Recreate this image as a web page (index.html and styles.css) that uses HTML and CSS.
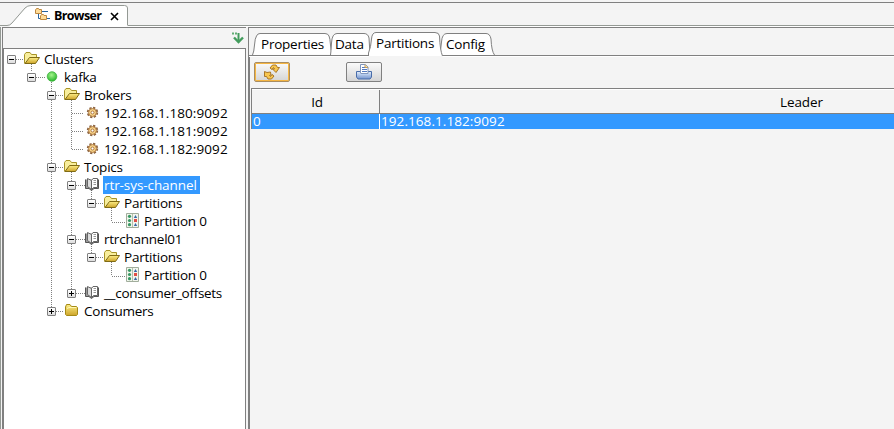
FILE: index.html
```html
<!DOCTYPE html>
<html lang="en">
<head>
<meta charset="utf-8">
<title>Browser</title>
<link rel="stylesheet" href="styles.css">
</head>
<body>
<svg width="0" height="0" class="defs">
  <defs>
    <linearGradient id="gold" x1="0" y1="0" x2="0" y2="1"><stop offset="0" stop-color="#fdee86"/><stop offset="1" stop-color="#cda42a"/></linearGradient>
    <linearGradient id="blue" x1="0" y1="0" x2="0" y2="1"><stop offset="0" stop-color="#e4eefb"/><stop offset="1" stop-color="#7394ce"/></linearGradient>
    <radialGradient id="green" cx=".45" cy=".35" r=".65"><stop offset="0" stop-color="#a4f48c"/><stop offset="1" stop-color="#27b52b"/></radialGradient>
    <symbol id="open" viewBox="0 0 16 16"><path d="M.5 12.500V3.500L2 1.500H6L7.500 3.500H12.500V7" fill="#f8ee9c" stroke="#a79327"/><path d="M1 12.500L5.500 6.500H15.500L11.500 12.500Z" fill="url(#gold)" stroke="#806b14"/></symbol>
    <symbol id="closed" viewBox="0 0 16 16"><path d="M1.500 4L2.500 1.500H6L7.500 3.500H12.500L13.500 4.500V11.500L12.500 12.500H2.500L1.500 11.500Z" fill="url(#gold)" stroke="#a58a16"/><path d="M3 5.500L5 4.500H12" fill="none" stroke="#fff7b4"/></symbol>
    <symbol id="dot" viewBox="0 0 16 16"><circle cx="8" cy="7.500" r="4.800" fill="url(#green)" stroke="#36ae37" stroke-width=".7"/></symbol>
    <symbol id="gear" viewBox="0 0 16 16"><circle cx="8.500" cy="7.500" r="4.700" fill="none" stroke="#8a6240" stroke-width="2" stroke-dasharray="2.200 1.490"/><circle cx="8.500" cy="7.500" r="3.900" fill="#f7d48b" stroke="#b27b40"/><circle cx="8.500" cy="7.500" r="1.500" fill="#fff" stroke="#a66c35" stroke-width=".9"/></symbol>
    <symbol id="book" viewBox="0 0 16 16"><path d="M1.500 2.500V11.500H5L7.500 13.500 10 11.500H14.500V2.500" fill="#999" stroke="#555"/><path d="M3.500 1.500L7.500 3.500V12.500L3.500 9.500Z" fill="#ddd" stroke="#666"/><path d="M7.500 3.500L9 1.500H13.500V10.500H9.500L7.500 12.500Z" fill="#fff" stroke="#666"/><path d="M9.500 3.500H12M9.500 5.500H12M9.500 7.500H12" stroke="#999"/></symbol>
    <symbol id="part" viewBox="0 0 16 16"><path d="M2.500 .5H14.500V14.500H2.500Z" fill="#f2f6ed" stroke="#a1ad9c"/><path d="M8.500 1V14" stroke="#b5c0ad"/><g fill="#379763"><circle cx="5.500" cy="3.300" r="1.600"/><circle cx="5.500" cy="7.500" r="1.600"/><circle cx="5.500" cy="11.700" r="1.600"/></g><path d="M9.800 5L11.500 2 13.200 5Z" fill="#3867a5"/><path d="M10 6H13V9H10Z" fill="#e14d45"/><path d="M9.800 13L11.500 10 13.200 13Z" fill="#3867a5"/></symbol>
  </defs>
</svg>
<div class="window">
  <div class="docbar">
    <div class="doctab">
      <svg class="tabshape" width="128" height="22"><path d="M9 22L26 3Q28 .5 32 .5H124Q127.500 .5 127.500 4V22Z" fill="#fff"/><path d="M0 20.500H7Q10 20.500 12 18L25 3Q27.500 .5 31 .5H124.500Q127.500 .5 127.500 3V20.500" fill="none" stroke="#949994"/></svg>
      <svg class="treeicon" width="16" height="14"><path d="M3.500 5V10.500H6M7 3.500H13M11 10.500H15" fill="none" stroke="#2764a0"/><path d="M.5 5.500V2L1.500.5H3.500L4 1.500H6.500V5.500Z" fill="#ffdc99" stroke="#bd8840"/><path d="M5.500 11.500V8L6.500 6.500H8.500L9 7.500H11.500V11.500Z" fill="#ffdc99" stroke="#bd8840"/></svg>
      <span class="doctitle">Browser</span>
      <svg class="close" width="9" height="9"><path d="M1 1L8 8M8 1L1 8" stroke="#000" stroke-width="1.600"/></svg>
    </div>
  </div>
  <div class="main">
    <aside class="side">
      <div class="sidebar"><svg width="13" height="12"><path d="M1 1.500H7" stroke="#62ad75" stroke-width="2" stroke-dasharray="2 1"/><path d="M7.500 1V9" stroke="#439c5d" stroke-width="2"/><path d="M3 5.500L7.500 10 12 5.500" fill="none" stroke="#439c5d" stroke-width="2.400"/></svg></div>
      <div class="tree">
        <svg class="lines" width="236" height="280"><path d="M11.500 9H20M27.500 14V22M31.500 27H42M47.500 32V258M51.500 45H60M67.500 50V100M68 63H80M68 81H80M68 99H80M51.500 117H60M67.500 122V240M71.500 135H81M87.500 140V150M91.500 153H101M107.500 158V172H122M71.500 189H81M87.500 194V204M91.500 207H101M107.500 212V226H122M71.500 243H81M51.500 261H60" fill="none" stroke="#808080" stroke-dasharray="1 1" shape-rendering="crispEdges"/></svg>
        <div class="node l0"><i class="tog"></i><svg><use href="#open"/></svg><span>Clusters</span></div>
        <div class="node l1"><i class="tog"></i><svg><use href="#dot"/></svg><span>kafka</span></div>
        <div class="node l2"><i class="tog"></i><svg><use href="#open"/></svg><span>Brokers</span></div>
        <div class="node l3"><i class="gap"></i><svg><use href="#gear"/></svg><span class="ip">192.168.1.180:9092</span></div>
        <div class="node l3"><i class="gap"></i><svg><use href="#gear"/></svg><span class="ip">192.168.1.181:9092</span></div>
        <div class="node l3"><i class="gap"></i><svg><use href="#gear"/></svg><span class="ip">192.168.1.182:9092</span></div>
        <div class="node l2"><i class="tog"></i><svg><use href="#open"/></svg><span>Topics</span></div>
        <div class="node l3"><i class="tog"></i><svg><use href="#book"/></svg><span class="selected">rtr-sys-channel</span></div>
        <div class="node l4"><i class="tog"></i><svg><use href="#open"/></svg><span>Partitions</span></div>
        <div class="node l5"><i class="gap"></i><svg><use href="#part"/></svg><span>Partition 0</span></div>
        <div class="node l3"><i class="tog"></i><svg><use href="#book"/></svg><span>rtrchannel01</span></div>
        <div class="node l4"><i class="tog"></i><svg><use href="#open"/></svg><span>Partitions</span></div>
        <div class="node l5"><i class="gap"></i><svg><use href="#part"/></svg><span>Partition 0</span></div>
        <div class="node l3"><i class="tog plus"></i><svg><use href="#book"/></svg><span class="offsets">__consumer_offsets</span></div>
        <div class="node l2"><i class="tog plus"></i><svg><use href="#closed"/></svg><span>Consumers</span></div>
      </div>
    </aside>
    <section class="content">
      <nav class="tabs">
        <svg class="tabsbg" width="250" height="27"><g fill="#fff" stroke="#808080"><path d="M1.500 25Q3 22 3.500 15T5.500 6Q6.500 3.500 9 3.500H74Q77 3.500 78 6Q79 8 79.500 15T81.500 24.500"/><path d="M79.500 25Q80 22 80.500 13Q81 3.500 86 3.500H113Q117 3.500 118 8L119 24.500"/><path d="M188.500 25Q190 18 190.500 12Q191 3.500 196 3.500H235Q239 3.500 240 9Q240.500 21 243.500 25"/></g><path d="M0 25.500H250" stroke="#808080"/><path d="M117.500 27V23Q120 17 120.500 9Q121 2.500 125 2.500H184Q188 2.500 188.500 6Q189 20 191.500 25V27Z" fill="#f4f4f4"/><path d="M117.500 26V23Q120 17 120.500 9Q121 2.500 125 2.500H184Q188 2.500 188.500 6Q189 20 191.500 26" fill="#fff" stroke="#808080"/></svg>
        <span class="tab properties">Properties</span><span class="tab data">Data</span><span class="tab active">Partitions</span><span class="tab config">Config</span>
      </nav>
      <div class="panel">
        <div class="tools">
          <button class="tool focus" aria-label="Refresh"><svg width="16" height="16"><g fill="#f8c64e" stroke="#a06c1c" stroke-width=".9" stroke-linejoin="round"><path d="M6 4L8.500 1H12L13.500 3.500H15.500L12 8.500 8.500 5H10.500L9.500 3.500 8 5.500Z"/><path d="M10 12L7.500 15H4L2.500 12.500H.5V7.500L3 8.500 6.500 8 7 11 5.500 11.500 6.500 12.500 8 10.500Z"/></g></svg></button>
          <button class="tool" aria-label="Print"><svg width="16" height="16"><path d="M.5 7.500H15.500V13L14 15H2L.5 13Z" fill="url(#blue)" stroke="#486ca9"/><path d="M4.500 9V.5H9.500L12 3V9.500H4.500" fill="#fff" stroke="#8196bc"/><path d="M6 3.500H9M6 5.500H11M6 7.500H11" stroke="#537ac0"/><path d="M9 .5V3.500H12" fill="#ffdf97" stroke="#c19d60"/><path d="M3 10.500H13" stroke="#b8cff1"/></svg></button>
        </div>
        <div class="table">
          <div class="row head"><div class="id">Id</div><div class="leader">Leader</div></div>
          <div class="row picked"><div class="id">0</div><div class="leader ip">192.168.1.182:9092</div></div>
        </div>
      </div>
    </section>
  </div>
</div>
</body>
</html>
```
FILE: styles.css
```css
* { box-sizing: border-box; }
body { margin: 0; overflow: hidden; background: #f4f4f4; color: #000; font: 13.5px/18px "Open Sans", sans-serif; letter-spacing: -.23px; }
.defs { position: absolute; }
.window { height: 429px; display: flex; flex-direction: column; border-top: 2px solid #f4f4f4; }
.docbar { height: 25px; flex: none; border-top: 1px solid #808080; border-bottom: 1px solid #fff; padding-top: 2px; background: linear-gradient(#949994, #949994) 0 22px / 100% 1px no-repeat; }
.doctab { position: relative; width: 128px; height: 22px; display: flex; align-items: center; padding-left: 35px; background: #f4f4f4; }
.tabshape { position: absolute; left: 0; top: 0; }
.treeicon, .doctitle, .close { position: relative; flex: none; }
.treeicon { margin-top: -2px; }
.doctitle { font-size: 12.5px; font-weight: 700; margin-left: 3px; width: 56px; letter-spacing: -.65px; }
.main { flex: 1; display: flex; border-left: 1px solid #949994; }
.side { width: 244px; flex: none; border: solid #808080; border-width: 1px 0 0 1px; margin-left: 1px; display: flex; flex-direction: column; }
.sidebar { height: 20px; padding: 4px 0 0 228px; }
.sidebar svg { display: block; }
.tree { position: relative; flex: 1; border: 1px solid #808080; border-bottom: 0; background: #fff; padding-top: 1px; }
.lines { position: absolute; left: 0; top: 1px; }
.node { height: 18px; display: flex; align-items: center; position: relative; white-space: nowrap; }
.node > svg { width: 16px; height: 16px; margin: 0 4px 0 8px; flex: none; }
.tog, .gap { width: 9px; height: 9px; flex: none; }
.tog { border: 1px solid #808080; border-radius: 1px; background: linear-gradient(#000, #000) center / 5px 1px no-repeat, linear-gradient(#fff, #ddd); }
.plus { background: linear-gradient(#000, #000) center / 5px 1px no-repeat, linear-gradient(#000, #000) center / 1px 5px no-repeat, linear-gradient(#fff, #ddd); }
.l0 { padding-left: 3px; } .l1 { padding-left: 23px; } .l2 { padding-left: 43px; }
.l3 { padding-left: 63px; } .l4 { padding-left: 83px; } .l5 { padding-left: 103px; }
.ip { letter-spacing: .08px; }
.offsets { letter-spacing: -.3px; }
.selected { background: #39f; color: #fff; padding: 0 3px 0 1px; margin-left: -1px; letter-spacing: -.08px; }
.content { flex: 1; min-width: 0; margin-left: 2px; border: solid #808080; border-width: 1px 0 0 1px; display: flex; flex-direction: column; }
.tabs { position: relative; height: 29px; display: flex; flex: none; border-bottom: 1px solid #fff; background: linear-gradient(#808080, #808080) 0 27px / 100% 1px no-repeat; }
.tabsbg { position: absolute; left: 2px; top: 2px; }
.tab { position: relative; padding-top: 7px; }
.properties { margin-left: 12px; width: 74px; }
.data { width: 41px; }
.active { width: 70px; padding-top: 6px; }
.panel { flex: 1; border-left: 1px solid #808080; padding-left: 1px; }
.tools { height: 31px; display: flex; gap: 56px; padding: 5px 0 0 3px; }
.tool { width: 36px; height: 20px; padding: 0; border: 1px solid #808080; border-radius: 2px; background: linear-gradient(#fafafa, #d5d5d5); display: flex; align-items: center; justify-content: center; }
.focus { border-color: #a98d61; box-shadow: inset 0 0 0 1px #f6b642; }
.table { border-top: 1px solid #808080; border-left: 1px solid #808080; }
.row { display: grid; grid-template-columns: 128px 1fr; }
.head { height: 25px; border-top: 1px solid #fff; border-bottom: 1px solid #808080; line-height: 24px; }
.head .id { text-align: center; border-right: 1px solid #808080; padding-left: 3px; }
.head .leader { padding-left: 400px; letter-spacing: -.1px; }
.picked { height: 15px; line-height: 14px; color: #fff; background: #39f; }
.picked .id { border-right: 1px solid #fff; padding-left: 1px; }
.picked .leader { padding-left: 1px; }
```
